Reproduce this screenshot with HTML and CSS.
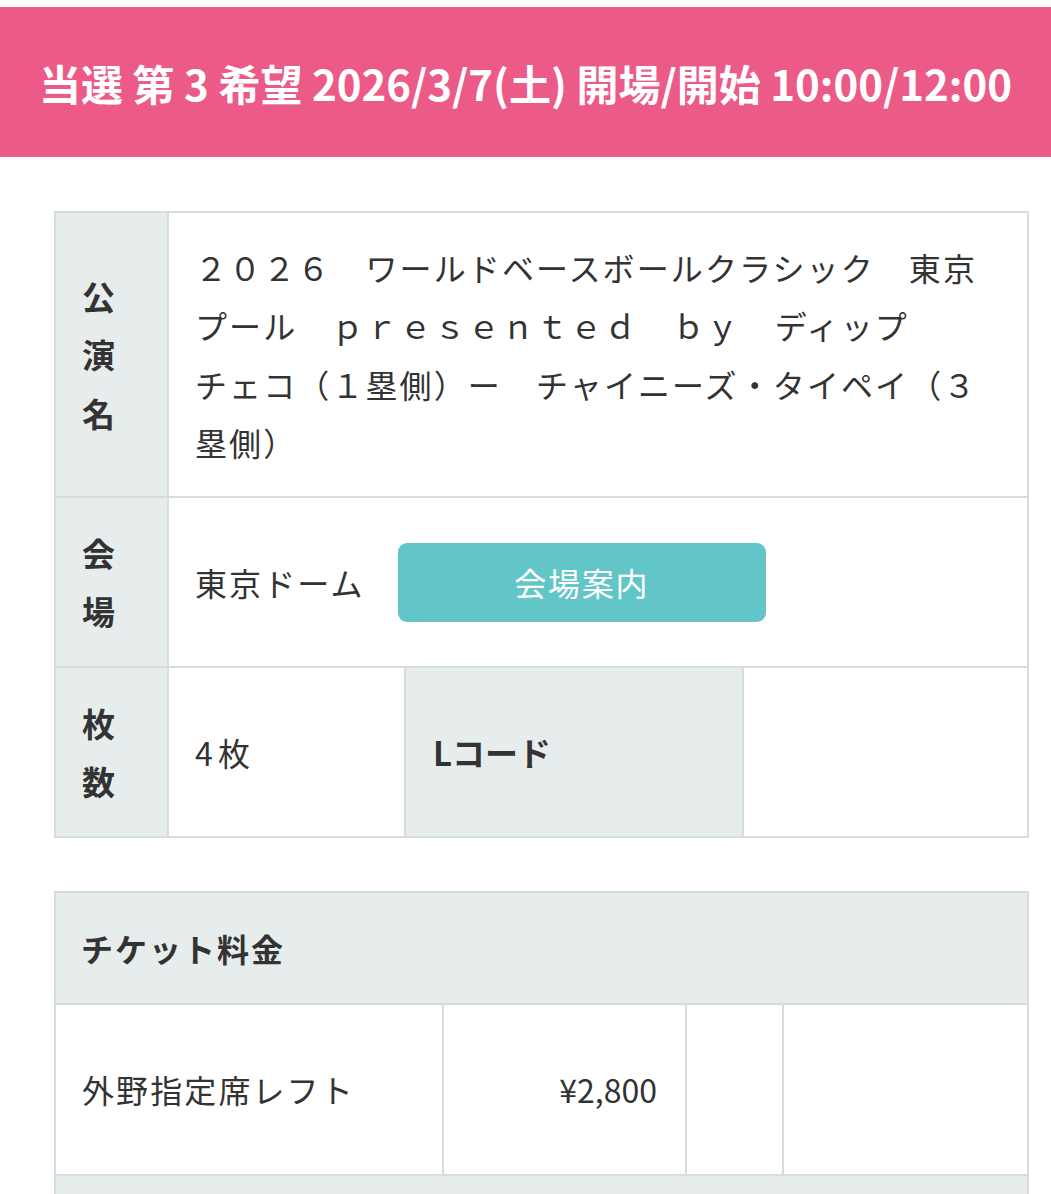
FILE: index.html
```html
<!DOCTYPE html>
<html lang="ja">
<head>
<meta charset="utf-8">
<title>当選</title>
<link rel="stylesheet" href="styles.css">
</head>
<body>
<header class="result-head">
  <h1 class="result-title">当選 第 3 希望 2026/3/7(土) 開場/開始 10:00/12:00</h1>
</header>
<main class="content">
  <table class="info">
    <colgroup>
      <col class="w-label"><col class="w-val1"><col class="w-label2"><col class="w-val2">
    </colgroup>
    <tr class="row-title">
      <th class="label">公<br>演<br>名</th>
      <td colspan="3" class="value title">２０２６　ワールドベースボールクラシック　東京<br>プール　ｐｒｅｓｅｎｔｅｄ　ｂｙ　ディップ<br>チェコ（１塁側）ー　チャイニーズ・タイペイ（３<br>塁側）</td>
    </tr>
    <tr>
      <th class="label">会<br>場</th>
      <td colspan="3" class="value venue">
        <span class="venue-name">東京ドーム</span>
        <a class="venue-btn" href="#">会場案内</a>
      </td>
    </tr>
    <tr>
      <th class="label">枚<br>数</th>
      <td class="value"><span class="qty-num">4</span>枚</td>
      <th class="label label-wide">Lコード</th>
      <td class="value"></td>
    </tr>
  </table>

  <table class="price">
    <colgroup>
      <col class="p-name"><col class="p-amount"><col class="p-c3"><col class="p-c4">
    </colgroup>
    <tr>
      <th colspan="4" class="price-head">チケット料金</th>
    </tr>
    <tr class="price-row">
      <td class="value">外野指定席レフト</td>
      <td class="value amount">¥2,800</td>
      <td></td>
      <td></td>
    </tr>
    <tr>
      <th colspan="4" class="price-head next"></th>
    </tr>
  </table>
</main>
</body>
</html>
```
FILE: styles.css
```css
html, body {
  margin: 0;
  padding: 0;
  background: #ffffff;
}
body {
  font-family: "Noto Sans CJK JP", "Noto Sans", sans-serif;
  color: #333333;
}
.result-head {
  margin-top: 7px;
  height: 150px;
  background: #ec5a88;
  display: flex;
  align-items: center;
  justify-content: center;
}
.result-title {
  margin: 0;
  color: #ffffff;
  font-size: 42px;
  font-weight: 700;
  letter-spacing: 0;
  white-space: nowrap;
}
.content {
  padding: 54px 0 0 54px;
}
table {
  border-collapse: collapse;
  table-layout: fixed;
  width: 973px;
}
th, td {
  border: 2px solid #d6dddd;
  padding: 0;
}
.w-label { width: 113px; }
.w-val1 { width: 237px; }
.w-label2 { width: 338px; }
.w-val2 { width: 285px; }

.label {
  background: #e7eded;
  font-size: 33px;
  font-weight: 700;
  line-height: 58.5px;
  text-align: left;
  padding: 25.5px 0 25.5px 26px;
  vertical-align: middle;
}
.label-wide {
  padding-left: 27px;
}
.value {
  font-size: 32px;
  letter-spacing: 2.1px;
  line-height: 58.5px;
  padding: 24.5px 18px 24.5px 26px;
  vertical-align: middle;
  white-space: nowrap;
}
.qty-num {
  margin-right: 3px;
}
.venue {
  padding-top: 0;
  padding-bottom: 0;
}
.venue-name {
  display: inline-block;
  vertical-align: middle;
}
.venue-btn {
  display: inline-flex;
  vertical-align: middle;
  align-items: center;
  justify-content: center;
  width: 368px;
  height: 79px;
  margin-left: 24px;
  border-radius: 9px;
  background: #62c6c8;
  color: #ffffff;
  text-decoration: none;
  font-size: 32px;
  letter-spacing: 1.8px;
}

.price {
  margin-top: 53px;
}
.p-name { width: 388px; }
.p-amount { width: 243px; }
.p-c3 { width: 97px; }
.p-c4 { width: 245px; }
.price-head {
  background: #e7eded;
  height: 112px;
  box-sizing: border-box;
  padding: 0 0 0 25px;
  text-align: left;
  font-size: 32px;
  font-weight: 700;
  letter-spacing: 2px;
  vertical-align: middle;
}
.price-row td {
  height: 171px;
  box-sizing: border-box;
}
.amount {
  text-align: right;
  padding-right: 28px;
  letter-spacing: 0;
}
```
